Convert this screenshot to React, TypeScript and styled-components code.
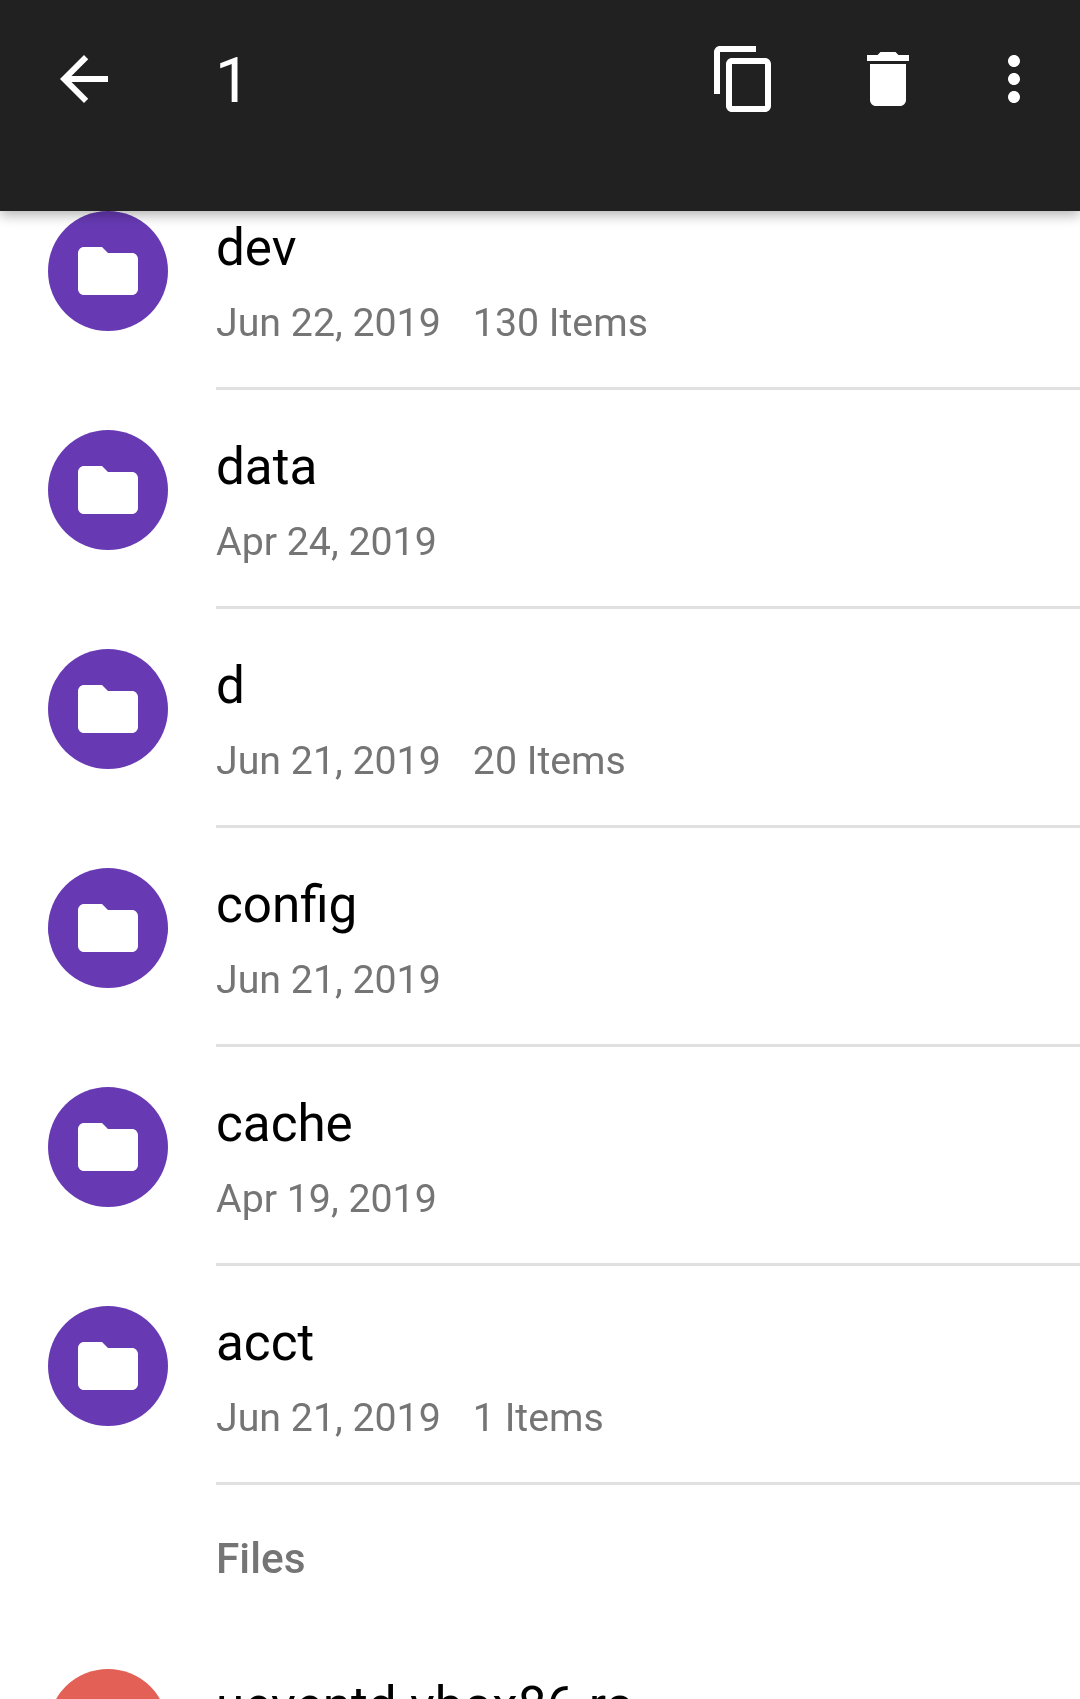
import React from 'react';
import styled, { createGlobalStyle } from 'styled-components';

const folders = [
  { name: 'dev', date: 'Jun 22, 2019', items: '130 Items' },
  { name: 'data', date: 'Apr 24, 2019' },
  { name: 'd', date: 'Jun 21, 2019', items: '20 Items' },
  { name: 'config', date: 'Jun 21, 2019' },
  { name: 'cache', date: 'Apr 19, 2019' },
  { name: 'acct', date: 'Jun 21, 2019', items: '1 Items' },
];

const App: React.FC = () => {
  return (
    <Screen>
      <GlobalStyle />
      <Toolbar>
        <BackButton>
          <path d="M20 11H7.83l5.59-5.59L12 4l-8 8 8 8 1.41-1.41L7.83 13H20v-2z" />
        </BackButton>
        <Count>1</Count>
        <Actions>
          <ToolIcon viewBox="0 0 24 24">
            <path d="M16 1H4c-1.1 0-2 .9-2 2v14h2V3h12V1zm3 4H8c-1.1 0-2 .9-2 2v14c0 1.1.9 2 2 2h11c1.1 0 2-.9 2-2V7c0-1.1-.9-2-2-2zm0 16H8V7h11v14z" />
          </ToolIcon>
          <ToolIcon viewBox="0 0 24 24">
            <path d="M6 19c0 1.1.9 2 2 2h8c1.1 0 2-.9 2-2V7H6v12zM19 4h-3.5l-1-1h-5l-1 1H5v2h14V4z" />
          </ToolIcon>
          <MenuIcon viewBox="0 0 24 24">
            <path d="M12 8c1.1 0 2-.9 2-2s-.9-2-2-2-2 .9-2 2 .9 2 2 2zm0 2c-1.1 0-2 .9-2 2s.9 2 2 2 2-.9 2-2-.9-2-2-2zm0 6c-1.1 0-2 .9-2 2s.9 2 2 2 2-.9 2-2-.9-2-2-2z" />
          </MenuIcon>
        </Actions>
      </Toolbar>
      <List>
        {folders.map((folder) => (
          <Row key={folder.name}>
            <Avatar>
              <FolderIcon viewBox="0 0 24 24">
                <path d="M10 4H4c-1.1 0-1.99.9-1.99 2L2 18c0 1.1.9 2 2 2h16c1.1 0 2-.9 2-2V8c0-1.1-.9-2-2-2h-8l-2-2z" />
              </FolderIcon>
            </Avatar>
            <RowBody>
              <Title>{folder.name}</Title>
              <Meta>
                <span>{folder.date}</span>
                {folder.items && <span>{folder.items}</span>}
              </Meta>
            </RowBody>
          </Row>
        ))}
        <SectionHeader>Files</SectionHeader>
        <Row>
          <Avatar $file />
          <RowBody>
            <Title>ueventd.vbox86.rc</Title>
          </RowBody>
        </Row>
      </List>
    </Screen>
  );
};

const GlobalStyle = createGlobalStyle`
html, body {
  margin: 0;
  padding: 0;
  background: #fff;
}
`;

const Screen = styled.div`
width: 1080px;
height: 1699px;
overflow: hidden;
font-family: Roboto, "Liberation Sans", sans-serif;
background-color: #fff;
`;

const Toolbar = styled.div`
position: relative;
z-index: 1;
display: flex;
align-items: flex-start;
height: 211px;
box-sizing: border-box;
padding: 43px 30px 0 48px;
background-color: #212121;
box-shadow: 0 4px 12px rgba(0, 0, 0, 0.3);
`;

const ToolIcon = styled.svg`
display: block;
width: 72px;
height: 72px;
fill: #fff;
`;

const BackButton = styled(ToolIcon).attrs({ viewBox: '0 0 24 24' })``;

const MenuIcon = styled(ToolIcon)`
margin-left: -18px;
`;

const Count = styled.div`
margin-top: 2px;
margin-left: 95px;
color: #fff;
font-size: 63px;
line-height: 72px;
will-change: transform;
`;

const Actions = styled.div`
display: flex;
gap: 72px;
margin-left: auto;
`;

const List = styled.div`
margin-top: -40px;
will-change: transform;
`;

const Row = styled.div`
display: flex;
align-items: flex-start;
gap: 48px;
height: 219px;
padding-left: 48px;
`;

const Avatar = styled.div<{ $file?: boolean }>`
display: flex;
flex-shrink: 0;
justify-content: center;
align-items: center;
width: 120px;
height: 120px;
margin-top: 40px;
border-radius: 50%;
background-color: ${(props) => (props.$file ? '#e26055' : '#673ab4')};
`;

const FolderIcon = styled.svg`
width: 72px;
height: 72px;
fill: #fff;
`;

const RowBody = styled.div`
flex: 1;
height: 219px;
box-sizing: border-box;
padding-top: 41px;
border-bottom: 3px solid #e0e0e0;
`;

const Title = styled.div`
color: #000;
font-size: 51.2px;
line-height: 72px;
`;

const Meta = styled.div`
display: flex;
gap: 32px;
margin-top: 15px;
color: #757575;
font-size: 39.3px;
line-height: 48px;
`;

const SectionHeader = styled.div`
display: flex;
align-items: center;
height: 144px;
box-sizing: border-box;
padding: 2px 0 0 216px;
color: #757575;
font-size: 42.4px;
font-weight: 500;
`;

export default App;
